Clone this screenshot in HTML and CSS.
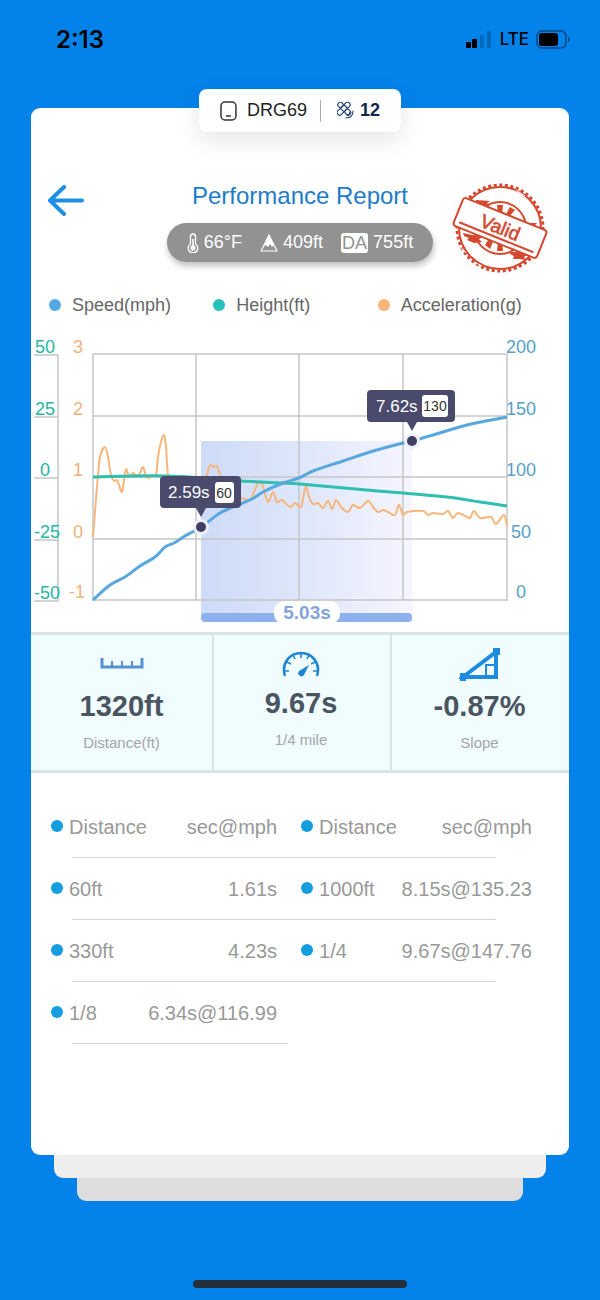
FILE: index.html
```html
<!DOCTYPE html>
<html lang="en">
<head>
  <meta charset="UTF-8">
  <meta name="viewport" content="width=device-width, initial-scale=1.0">
  <title>Performance Report</title>
  <link rel="stylesheet" href="styles.css">
</head>
<body>
  <div class="status-bar">
    <span class="clock">2:13</span>
    <div class="status-icons">
      <svg width="27" height="18" viewBox="0 0 27 18">
        <rect x="0" y="12" width="5" height="6" rx="1"/>
        <rect x="6" y="9" width="5" height="9" rx="1"/>
        <rect x="14" y="5" width="4" height="13" rx="1" opacity=".2"/>
        <rect x="21" y="1" width="4" height="17" rx="1" opacity=".2"/>
      </svg>
      <span class="network">LTE</span>
      <svg width="36" height="19" viewBox="0 0 36 19">
        <rect x="1" y="1" width="29" height="17" rx="5" fill="none" stroke="#000" stroke-width="1.5" opacity=".45"/>
        <rect x="3" y="3" width="19" height="13" rx="3"/>
        <path d="M32 7c2 0 2 5 0 5z" opacity=".5"/>
      </svg>
    </div>
  </div>

  <main class="card">
    <div class="device-badge">
      <svg width="17" height="20" viewBox="0 0 17 20" fill="none" stroke="#333" stroke-width="1.5">
        <rect x="1" y="1" width="15" height="18" rx="4"/>
        <path d="M6 15h5"/>
      </svg>
      <span class="device-name">DRG69</span>
      <span class="separator"></span>
      <svg width="17" height="17" viewBox="0 0 17 17" fill="none" stroke="#1d3c6e" stroke-width="1.1" stroke-linecap="round">
        <g transform="rotate(45 7 7)">
          <rect x="-1" y="5" width="16" height="5" rx="2" transform="rotate(90 7 7)"/>
          <rect x="-1" y="4" width="5" height="5" rx="2"/>
          <rect x="9" y="4" width="6" height="5" rx="2"/>
          <path d="M4 4h5M4 9h5"/>
        </g>
        <path d="M16 9q0 7-7 7M13 10q0 3-3 3"/>
      </svg>
      <strong class="satellites">12</strong>
    </div>

    <header class="report-header">
      <button type="button" class="back-btn" aria-label="Back">
        <svg width="37" height="31" viewBox="0 0 37 31" fill="none" stroke="#1f8fe6" stroke-width="4" stroke-linecap="round" stroke-linejoin="round">
          <path d="M17 2 3 15.500 17 29M3 15.500h32"/>
        </svg>
      </button>

      <div class="headline">
        <h1>Performance Report</h1>
        <div class="weather">
          <span class="weather-item">
            <svg width="12" height="20" viewBox="0 0 12 20" fill="none" stroke="#fff" stroke-width="1.3">
              <path d="M3.500 11V3.500a2.500 2.500 0 0 1 5 0V11a4.800 4.800 0 1 1-5 0z"/>
              <path d="M6 6v9" stroke-width="1.6"/>
              <circle cx="6" cy="15" r="2" fill="#fff"/>
            </svg>
            66°F
          </span>
          <span class="weather-item">
            <svg width="18" height="18" viewBox="0 0 18 18">
              <path d="M9 1 17 17H1z" fill="none" stroke="#fff" stroke-width="1.2" stroke-linejoin="round"/>
              <path d="M9 1l5 10-2 2-2-3-2 3-2-2-2 2z" fill="#fff"/>
            </svg>
            409ft
          </span>
          <span class="weather-item"><b class="da">DA</b>755ft</span>
        </div>
      </div>

      <svg class="stamp" width="96" height="94" viewBox="0 0 96 94" fill="none" stroke="#d4482f">
        <circle cx="48" cy="46" r="43" stroke-width="3" stroke-dasharray="3 2.600"/>
        <circle cx="48" cy="46" r="41" stroke-width="2"/>
        <circle cx="48" cy="46" r="26" stroke-width="2"/>
        <g fill="#d4482f" stroke="none">
          <path d="M45 23h6l-1 9h-4zM58 25l5 3-7 8-3-2zM36 25l-4 3 7 7 3-2z"/>
          <path d="M45 69h6l-1-10h-4zM58 67l5-4-6-7-3 2zM38 67l-5-4 5-8 4 2z"/>
          <path d="M24 18l14 1-3 2 3 3-6 1-6-1 2-2-4-1zM70 39l6 2 9 0-3 3 2 3-9-2-5-2 2-1zM11 51l9 2 11 2-4 2 3 3-8 1-7-3 2-2-5-2zM58 70l8 0 9 3-3 2 2 3-6-1-7 0 1-3-4-2z"/>
        </g>
        <g transform="rotate(22 48 46)">
          <rect x="3" y="31" width="90" height="30" rx="3" fill="#fff" stroke-width="2"/>
          <path d="M8 56h80" stroke-width="2"/>
          <text x="48" y="52" text-anchor="middle" class="stamp-text">Valid</text>
        </g>
        <path d="M64 8l9 6M70 13l9 9M8 64l6 7M22 80l8 4" stroke="#fff" stroke-width="1"/>
      </svg>
    </header>

    <ul class="legend">
      <li class="speed">Speed(mph)</li>
      <li class="height">Height(ft)</li>
      <li class="accel">Acceleration(g)</li>
    </ul>

    <svg class="chart" viewBox="0 0 538 300" role="img" aria-label="Speed, height and acceleration over time">
      <defs>
        <linearGradient id="range">
          <stop offset="0" stop-color="#cddbf7"/>
          <stop offset=".5" stop-color="#dfe7fa"/>
          <stop offset="1" stop-color="#f6f5ff"/>
        </linearGradient>
      </defs>
      <!-- plot area is 414 x 246 -->
      <g transform="translate(62 22)">
        <path class="range" d="M108 87H319V264H108z"/>
        <path class="grid" d="M0 0H414V246H0zM0 62H414M0 123H414M0 185H414M103 0V246M206 0V246M310 0V246"/>
        <path class="grid" d="M-59 1H-35V247H-59M-59 63H-35M-59 124H-35M-59 186H-35"/>

        <g class="axis axis-height">
          <text x="-48" y="-1">50</text>
          <text x="-48" y="61">25</text>
          <text x="-48" y="122">0</text>
          <text x="-46" y="184">-25</text>
          <text x="-46" y="245">-50</text>
        </g>
        <g class="axis axis-accel">
          <text x="-15" y="-1">3</text>
          <text x="-15" y="61">2</text>
          <text x="-15" y="122">1</text>
          <text x="-15" y="184">0</text>
          <text x="-16" y="244">-1</text>
        </g>
        <g class="axis axis-speed">
          <text x="428" y="-1">200</text>
          <text x="428" y="61">150</text>
          <text x="428" y="122">100</text>
          <text x="428" y="184">50</text>
          <text x="428" y="244">0</text>
        </g>

        <path class="line line-accel" id="accelLine"/>
        <path class="line line-height" id="heightLine"/>
        <path class="line line-speed" id="speedLine"/>

        <rect class="duration-bar" x="108" y="259" width="211" height="9" rx="4"/>
        <rect class="duration-label" x="181" y="247" width="66" height="23" rx="10"/>
        <text class="duration-text" x="214" y="265">5.03s</text>

        <circle class="halo" cx="108" cy="173" r="8"/>
        <circle class="dot" cx="108" cy="173" r="5"/>
        <circle class="halo" cx="319" cy="87" r="8"/>
        <circle class="dot" cx="319" cy="87" r="5"/>

        <g class="tooltip">
          <path d="M71 122h73a4 4 0 0 1 4 4v24a4 4 0 0 1-4 4h-31l-5 9-5-9H71a4 4 0 0 1-4-4v-24a4 4 0 0 1 4-4z"/>
          <text class="tip-time" x="75" y="144">2.59s</text>
          <rect x="122" y="128" width="19" height="21" rx="3"/>
          <text class="tip-speed" x="131" y="144">60</text>
        </g>
        <g class="tooltip">
          <path d="M278 36h80a4 4 0 0 1 4 4v24a4 4 0 0 1-4 4h-34l-5 9-5-9h-36a4 4 0 0 1-4-4V40a4 4 0 0 1 4-4z"/>
          <text class="tip-time" x="283" y="58">7.62s</text>
          <rect x="329" y="41" width="26" height="22" rx="3"/>
          <text class="tip-speed" x="342" y="57">130</text>
        </g>
      </g>
    </svg>

    <section class="stats">
      <div class="stat">
        <svg width="44" height="34" viewBox="0 0 44 34" fill="none" stroke="#5591cf">
          <path d="M2 11v9h40v-9" stroke-width="3"/>
          <path d="M12 14v6M22 14v6M32 14v6" stroke-width="2"/>
        </svg>
        <strong>1320ft</strong>
        <span>Distance(ft)</span>
      </div>
      <div class="stat">
        <svg width="38" height="28" viewBox="0 0 38 28" fill="none" stroke="#1c86d1" stroke-width="2">
          <path d="M3 26C-1 13 8 3 19 3s20 10 16 23" stroke-width="2.5"/>
          <path d="M19 3v5M11 5l2 4M27 5l-2 4M5 12l4 2M33 12l-4 2M2 21h5M36 21h-5" stroke-width="1.6"/>
          <path d="M27 15l-5 10a3 3 0 1 1-5-4z" fill="#1c86d1" stroke="none"/>
        </svg>
        <strong>9.67s</strong>
        <span>1/4 mile</span>
      </div>
      <div class="stat">
        <svg width="42" height="34" viewBox="0 0 42 34" fill="none" stroke="#1d8be0">
          <path d="M4 30 37 5v25z" stroke-width="4"/>
          <path d="M27 30V18h10" stroke-width="2"/>
          <path d="M1 26h6v8H1zM34 1h7v7h-7z" fill="#1d8be0" stroke="none"/>
        </svg>
        <strong>-0.87%</strong>
        <span>Slope</span>
      </div>
    </section>

    <table class="splits">
      <thead>
        <tr>
          <th scope="col">Distance</th>
          <th scope="col">sec@mph</th>
          <th scope="col">Distance</th>
          <th scope="col">sec@mph</th>
        </tr>
      </thead>
      <tbody>
        <tr>
          <td>60ft</td>
          <td>1.61s</td>
          <td>1000ft</td>
          <td>8.15s@135.23</td>
        </tr>
        <tr>
          <td>330ft</td>
          <td>4.23s</td>
          <td>1/4</td>
          <td>9.67s@147.76</td>
        </tr>
        <tr class="half">
          <td>1/8</td>
          <td>6.34s@116.99</td>
          <td colspan="2"></td>
        </tr>
      </tbody>
    </table>
  </main>
  <div class="sheet sheet-near"></div>
  <div class="sheet sheet-far"></div>

  <div class="home-indicator"></div>

  <script src="chart.js"></script>
</body>
</html>
```

FILE: styles.css
```css
* {
  margin: 0;
  padding: 0;
  box-sizing: border-box;
}

body {
  font-family: "Liberation Sans", Arial, sans-serif;
  font-size: 18px;
  background: #0382ea;
  min-height: 100vh;
  display: flex;
  flex-direction: column;
}

svg {
  display: block;
  flex: none;
}

/* Status bar */
.status-bar {
  height: 78px;
  padding: 0 28px 0 56px;
  margin-bottom: 30px;
  display: flex;
  align-items: center;
  justify-content: space-between;
  font-family: Inter, sans-serif;
}

.clock {
  font-size: 24px;
  font-weight: 600;
}

.status-icons {
  display: flex;
  align-items: center;
  gap: 7px;
}

.network {
  font-size: 17px;
  font-weight: 500;
}

/* Card */
.card {
  position: relative;
  flex: 1;
  margin: 0 31px;
  padding-top: 74px;
  background: #fff;
  border-radius: 9px;
}

.device-badge {
  position: absolute;
  top: -19px;
  left: 50%;
  transform: translateX(-50%);
  height: 43px;
  padding: 0 21px;
  display: flex;
  align-items: center;
  background: #fff;
  border-radius: 8px;
  box-shadow: 0 8px 24px rgba(0, 0, 0, 0.1);
  color: #222;
}

.device-name {
  margin-left: 10px;
}

.separator {
  width: 1px;
  height: 22px;
  margin: 0 16px 0 13px;
  background: #aaa;
}

.satellites {
  margin-left: 6px;
  color: #12264f;
}

.report-header {
  display: grid;
  grid-template-columns: 1fr auto 1fr;
  align-items: start;
}

.back-btn {
  justify-self: start;
  margin: 3px 0 0 16px;
  border: none;
  background: none;
  cursor: pointer;
}

.headline {
  display: flex;
  flex-direction: column;
  align-items: center;
  gap: 13px;
}

h1 {
  font-size: 24px;
  line-height: 28px;
  font-weight: normal;
  color: #1c7cc9;
}

.weather {
  display: flex;
  align-items: center;
  gap: 18px;
  height: 39px;
  padding: 0 20px;
  border-radius: 20px;
  background: #929292;
  box-shadow: 1px 4px 6px rgba(0, 0, 0, 0.25);
  color: #fff;
}

.weather-item {
  display: flex;
  align-items: center;
  gap: 5px;
}

.da {
  padding: 0 1px;
  border-radius: 3px;
  background: #fff;
  color: #929292;
  font-weight: normal;
  line-height: 20px;
}

.stamp {
  justify-self: end;
  margin-right: 21px;
}

.stamp-text {
  font-size: 19px;
  fill: #d4482f;
  stroke-width: 0.6px;
}

/* Legend */
.legend {
  display: grid;
  grid-template-columns: repeat(3, 1fr);
  margin-top: 17px;
  padding: 0 27px 0 18px;
  list-style: none;
  line-height: 24px;
  color: #666;
}

.legend li {
  display: flex;
  align-items: center;
  gap: 11px;
}

.legend li::before {
  content: "";
  width: 12px;
  height: 12px;
  border-radius: 50%;
  background: currentColor;
}

.legend .speed::before {
  background: #54a9e4;
}

.legend .height::before {
  background: #28c1bc;
}

.legend .accel::before {
  background: #f8b577;
}

/* Chart */
.chart {
  width: 100%;
  margin-top: 15px;
}

.range {
  fill: url(#range);
}

.grid {
  fill: none;
  stroke: #c6c6c8;
  stroke-width: 1.5px;
}

.axis {
  font-size: 18px;
  text-anchor: middle;
}

.axis-height {
  fill: #27b5a4;
}

.axis-accel {
  fill: #f0b27a;
}

.axis-speed {
  fill: #559fc9;
}

.line {
  fill: none;
  stroke-linejoin: round;
}

.line-speed {
  stroke: #58a7df;
  stroke-width: 3px;
}

.line-height {
  stroke: #2fbfb0;
  stroke-width: 3px;
}

.line-accel {
  stroke: #f6b67c;
  stroke-width: 2px;
}

.duration-bar {
  fill: #8eb0ec;
}

.duration-label {
  fill: #fff;
}

.duration-text {
  font-size: 19px;
  font-weight: bold;
  text-anchor: middle;
  fill: #84a4dc;
}

.halo {
  fill: #eeeff8;
}

.dot {
  fill: #3e3f63;
}

.tooltip path {
  fill: #4a4a6d;
}

.tooltip rect {
  fill: #fff;
}

.tip-time {
  font-size: 17px;
  fill: #fff;
}

.tip-speed {
  font-size: 14px;
  text-anchor: middle;
  fill: #333;
}

/* Stats */
.stats {
  display: grid;
  grid-template-columns: 181fr 178fr 179fr;
  background: #f1fcfe;
  border-top: 3px solid #d6e4e6;
  border-bottom: 3px solid #d6e4e6;
}

.stat {
  display: flex;
  flex-direction: column;
  align-items: center;
  justify-content: center;
  padding: 12px 0 17px;
}

.stat + .stat {
  padding-right: 2px;
  border-left: 2px solid #d6e4e6;
}

.stat strong {
  margin: 8px 0 10px;
  font-size: 29px;
  line-height: 34px;
  color: #4a5562;
}

.stat span {
  font-size: 15px;
  line-height: 20px;
  color: #a3a6a9;
}

/* Split times */
.splits {
  width: calc(100% - 57px);
  margin: 23px 37px 0 20px;
  border-collapse: collapse;
  table-layout: fixed;
  font-size: 20px;
  color: #999;
}

.splits tr {
  height: 62px;
  background: linear-gradient(#d4d4d4, #d4d4d4) no-repeat 21px 100%;
  background-size: calc(100% - 57px) 1px;
}

.splits .half {
  background-size: 45% 1px;
}

.splits th,
.splits td {
  text-align: left;
  font-weight: normal;
  white-space: nowrap;
}

.splits th:nth-child(1) {
  width: 19%;
}

.splits th:nth-child(2) {
  width: 28%;
}

.splits th:nth-child(3) {
  width: 25%;
}

.splits tr > :nth-child(even) {
  text-align: right;
}

.splits tr > :nth-child(3) {
  padding-left: 24px;
}

.splits tr > :nth-child(odd):not(:empty)::before {
  content: "";
  display: inline-block;
  width: 12px;
  height: 12px;
  margin-right: 6px;
  border-radius: 50%;
  background: #149edf;
  vertical-align: 2px;
}

/* Sheets stacked under the card */
.sheet {
  height: 23px;
  border-radius: 0 0 9px 9px;
}

.sheet-near {
  margin: 0 54px;
  background: #eee;
}

.sheet-far {
  margin: 0 77px;
  background: #ddd;
}

.home-indicator {
  width: 214px;
  height: 8px;
  margin: 79px auto 12px;
  border-radius: 4px;
  background: #242f3d;
}
```

FILE: chart.js
```js
const speed = [
  [0, 246], [17, 231], [32, 223], [47, 212], [62, 203], [72, 193], [81, 189],
  [92, 182], [108, 173], [127, 159], [140, 153], [159, 145], [170, 138],
  [190, 129], [206, 124], [220, 117], [250, 107], [280, 97], [310, 89],
  [319, 87], [340, 81], [374, 71], [414, 63]
];

const height = [
  [0, 123], [40, 122], [75, 122], [110, 124], [148, 127], [190, 129],
  [207, 130], [240, 133], [274, 136], [310, 139], [354, 143], [387, 148],
  [414, 152]
];

const accel = [
  [0, 183], [4, 133], [7, 103], [12, 93], [15, 103], [18, 121], [21, 127],
  [24, 126], [26, 131], [29, 138], [31, 126], [33, 115], [36, 122], [40, 119],
  [44, 122], [47, 119], [50, 113], [53, 122], [56, 124], [60, 121], [63, 121],
  [65, 103], [68, 88], [71, 81], [73, 93], [75, 121], [79, 124], [92, 122],
  [96, 130], [104, 138], [110, 134], [114, 121], [116, 113], [118, 111],
  [120, 113], [124, 112], [127, 121], [134, 136], [141, 146], [148, 144],
  [154, 146], [158, 145], [161, 138], [164, 131], [167, 128], [170, 133],
  [175, 148], [180, 138], [184, 148], [189, 146], [197, 153], [202, 149],
  [208, 153], [210, 144], [213, 132], [216, 143], [220, 150], [225, 149],
  [230, 154], [235, 147], [239, 155], [243, 146], [248, 153], [255, 158],
  [260, 151], [267, 154], [275, 147], [280, 153], [285, 158], [290, 156],
  [295, 158], [302, 161], [306, 151], [310, 161], [314, 158], [330, 157],
  [335, 161], [340, 159], [350, 160], [355, 157], [360, 164], [365, 159],
  [374, 163], [377, 164], [381, 157], [387, 164], [398, 163], [403, 170],
  [411, 161], [414, 172]
];

// Smooth curve through all points
function curve(points) {
  let d = "M" + points[0].join(" ");
  for (let i = 0; i < points.length - 1; i++) {
    const p0 = points[i - 1] || points[i];
    const p1 = points[i];
    const p2 = points[i + 1];
    const p3 = points[i + 2] || p2;
    d += "C" + [
      p1[0] + (p2[0] - p0[0]) / 6, p1[1] + (p2[1] - p0[1]) / 6,
      p2[0] - (p3[0] - p1[0]) / 6, p2[1] - (p3[1] - p1[1]) / 6,
      p2[0], p2[1]
    ].join(" ");
  }
  return d;
}

document.getElementById("speedLine").setAttribute("d", curve(speed));
document.getElementById("heightLine").setAttribute("d", curve(height));
document.getElementById("accelLine").setAttribute("d", curve(accel));
```
